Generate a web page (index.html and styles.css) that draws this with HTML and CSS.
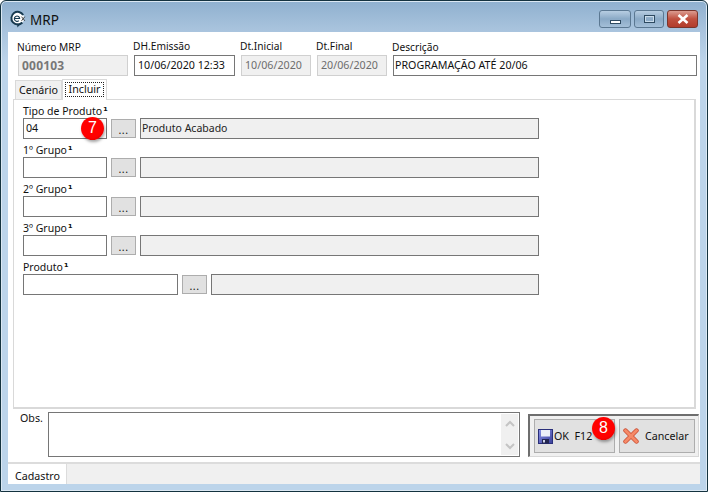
FILE: index.html
```html
<!DOCTYPE html>
<html lang="pt">
<head>
<meta charset="utf-8">
<title>MRP</title>
<link rel="stylesheet" href="styles.css">
</head>
<body>
<div class="window">
  <header class="titlebar">
    <div class="title-left">
      <svg class="app-icon" width="24" height="24" viewBox="0 0 24 24">
        <circle cx="10" cy="10" r="8" fill="#fff"/>
        <path d="M16 15A7.6 7.6 0 1 1 17 6" fill="none" stroke="#16394f" stroke-width="2.4"/>
        <path d="M6.6 10.2h6.2a3.2 3.2 0 1 0-1 2.6" fill="none" stroke="#16394f" stroke-width="1.3"/>
        <path d="M15 8l4 5M19 8l-4 5" stroke="#333" stroke-width="1.1"/>
        <path d="M10 16l3 2-3 3z" fill="#16394f"/>
      </svg>
      <span class="title-text">MRP</span>
    </div>
    <div class="controls">
      <div class="ctl ctl-min"><span class="glyph-min"></span></div>
      <div class="ctl ctl-max"><span class="glyph-max"></span></div>
      <div class="ctl ctl-close">
        <svg width="14" height="10" viewBox="0 0 14 10"><path d="M2.5 1l9 8M11.5 1l-9 8" stroke="#fff" stroke-width="2.6"/></svg>
      </div>
    </div>
  </header>

  <main class="client">
    <section class="top-fields">
      <div class="field f-num"><label class="lbl lbl-top lbl-low">Número MRP</label><div class="box box-ro bold">000103</div></div>
      <div class="field f-dh"><label class="lbl lbl-top">DH.Emissão</label><div class="box box-date">10/06/2020 12:33</div></div>
      <div class="field f-dt"><label class="lbl lbl-top">Dt.Inicial</label><div class="box box-ro">10/06/2020</div></div>
      <div class="field f-dt"><label class="lbl lbl-top">Dt.Final</label><div class="box box-ro">20/06/2020</div></div>
      <div class="field f-desc"><label class="lbl lbl-top lbl-low">Descrição</label><div class="box box-tight">PROGRAMAÇÃO ATÉ 20/06</div></div>
    </section>

    <nav class="tabs">
      <div class="tab">Cenário</div>
      <div class="tab tab-active"><span class="focus">Incluir</span></div>
    </nav>

    <section class="panel">
      <div class="row">
        <label class="lbl">Tipo de Produto<span class="sup">¹</span></label>
        <div class="controls-row">
          <div class="box w-code badge-host">04<span class="badge badge-7">7</span></div>
          <div class="dots">...</div>
          <div class="box box-fill w-desc">Produto Acabado</div>
        </div>
      </div>
      <div class="row">
        <label class="lbl">1º Grupo<span class="sup">¹</span></label>
        <div class="controls-row">
          <div class="box w-code"></div>
          <div class="dots">...</div>
          <div class="box box-fill w-desc"></div>
        </div>
      </div>
      <div class="row">
        <label class="lbl">2º Grupo<span class="sup">¹</span></label>
        <div class="controls-row">
          <div class="box w-code"></div>
          <div class="dots">...</div>
          <div class="box box-fill w-desc"></div>
        </div>
      </div>
      <div class="row">
        <label class="lbl">3º Grupo<span class="sup">¹</span></label>
        <div class="controls-row">
          <div class="box w-code"></div>
          <div class="dots">...</div>
          <div class="box box-fill w-desc"></div>
        </div>
      </div>
      <div class="row">
        <label class="lbl">Produto<span class="sup">¹</span></label>
        <div class="controls-row">
          <div class="box w-prod"></div>
          <div class="dots">...</div>
          <div class="box box-fill w-desc2"></div>
        </div>
      </div>
    </section>

    <section class="bottom">
      <label class="lbl obs-lbl">Obs.</label>
      <div class="obs">
        <div class="scroll">
          <svg width="10" height="7" viewBox="0 0 10 7"><path d="M1 6l4-4 4 4" fill="none" stroke="#c4c4c4" stroke-width="2"/></svg>
          <svg width="10" height="7" viewBox="0 0 10 7"><path d="M1 1l4 4 4-4" fill="none" stroke="#c4c4c4" stroke-width="2"/></svg>
        </div>
      </div>
      <div class="actions">
        <button class="btn btn-ok">
          <svg width="15" height="15" viewBox="0 0 15 15">
            <defs><linearGradient id="disk" x1="0" y1="0" x2="1" y2="1"><stop offset="0" stop-color="#8b93e6"/><stop offset="1" stop-color="#3a3f9a"/></linearGradient></defs>
            <rect x="0.5" y="0.5" width="14" height="14" fill="url(#disk)" stroke="#2a2f7a"/>
            <rect x="3" y="1" width="9" height="6.5" fill="#eef0f8"/>
            <rect x="4" y="10" width="7" height="4.5" fill="#23264f"/>
            <rect x="5" y="11" width="2" height="2.5" fill="#cfd2e8"/>
          </svg>
          <span>OK&nbsp; F12</span>
          <span class="badge badge-8">8</span>
        </button>
        <button class="btn btn-cancel">
          <svg width="16" height="16" viewBox="0 0 16 16"><path d="M2.5 2.5l11 11M13.5 2.5l-11 11" stroke="#c9492e" stroke-width="4.4" stroke-linecap="round"/><path d="M2.5 2.5l11 11M13.5 2.5l-11 11" stroke="#f58a68" stroke-width="3" stroke-linecap="round"/></svg>
          <span>Cancelar</span>
        </button>
      </div>
    </section>

    <footer class="status">
      <div class="status-tab">Cadastro</div>
    </footer>
  </main>
</div>
</body>
</html>
```
FILE: styles.css
```css
* { box-sizing: border-box; }
html, body { margin: 0; padding: 0; }
body {
  width: 708px;
  height: 492px;
  overflow: hidden;
  font-family: "Noto Sans", "DejaVu Sans", sans-serif;
  font-size: 10.7px;
  color: #111;
  background: #fff;
}
.window {
  width: 708px;
  height: 492px;
  display: flex;
  flex-direction: column;
  padding: 1px 7px 7px 7px;
  border: 1px solid #14323f;
  border-radius: 6px 6px 0 0;
  background: linear-gradient(#8fb0cf 0, #a8c3dd 28px, #bcd4ea 60px, #bcd4ea 100%);
  box-shadow: inset 0 0 0 1px #dbe8f3;
}
.titlebar {
  height: 30px;
  flex: none;
  display: flex;
  justify-content: space-between;
  align-items: flex-start;
}
.title-left { display: flex; align-items: center; height: 30px; padding: 5px 0 0 1px; }
.app-icon { width: 20px; height: 20px; }
.title-text { font-size: 13.5px; margin-left: 1px; color: #111; }
.controls { display: flex; gap: 3px; margin-top: 8px; margin-right: 2px; }
.ctl {
  height: 18px;
  width: 32px;
  border: 1px solid #5b7892;
  border-radius: 3px;
  display: flex;
  align-items: center;
  justify-content: center;
  background: linear-gradient(#b7cde2, #8aa9c6 50%, #a4bfd8);
}
.ctl-max { width: 30px; }
.ctl-close {
  width: 31px;
  border-color: #7a352c;
  background: linear-gradient(#dc9c90, #c0503f 50%, #b23c2c);
}
.glyph-min { width: 11px; height: 4px; background: #fff; border: 1px solid #2e4a61; margin-top: 5px; }
.glyph-max { width: 11px; height: 8px; background: transparent; border: 1px solid #2e4a61; box-shadow: inset 0 0 0 1px #c9dbea; }
.client {
  flex: 1;
  display: flex;
  flex-direction: column;
  background: #fff;
  min-height: 0;
}
.top-fields {
  display: flex;
  gap: 6px;
  padding: 7px 0 0 10px;
  height: 47px;
  flex: none;
}
.field { display: flex; flex-direction: column; }
.lbl { display: block; height: 16px; line-height: 14px; white-space: nowrap; color: #111; }
.lbl-top { font-size: 10.2px; margin-left: -1px; }
.lbl-low { padding-top: 1px; }
.f-num { width: 110px; }
.f-dh { width: 101px; }
.f-dt { width: 70px; }
.f-desc { width: 304px; }
.box {
  height: 21px;
  line-height: 19px;
  padding: 0 2px;
  border: 1px solid #767676;
  background: #fff;
  white-space: nowrap;
  overflow: hidden;
}
.box-date { padding-left: 3px; }
.box-tight { padding-left: 1px; }
.box-ro { border: 1px solid #d0d0d0; background: #f0f0f0; color: #6d6d6d; padding-left: 3px; }
.bold { font-weight: 700; font-size: 12px; letter-spacing: 0.2px; color: #777; }
.tabs { display: flex; height: 20px; flex: none; padding: 0 0 0 7px; align-items: flex-end; position: relative; z-index: 1; }
.tab {
  height: 19px;
  width: 47px;
  line-height: 18px;
  text-align: center;
  background: #f0f0f0;
  border: 1px solid #d9d9d9;
  border-bottom: 0;
}
.tab-active {
  height: 21px;
  width: 45px;
  background: #fff;
  padding: 2px 2px 0;
  margin-bottom: -1px;
}
.focus { display: block; height: 15px; line-height: 13px; border: 1px dotted #222; }
.panel {
  width: 683px;
  height: 310px;
  flex: none;
  margin-left: 5px;
  padding: 3px 0 0 9px;
  border: 1px solid #d9d9d9;
  border-right-width: 2px;
  border-bottom-width: 2px;
  display: flex;
  flex-direction: column;
}
.row { height: 39px; flex: none; }
.row .lbl { height: 15px; line-height: 17px; font-size: 10.5px; }
.sup { margin-left: 1px; font-size: 10.5px; font-family: "DejaVu Sans", sans-serif; font-weight: 700; line-height: 1; }
.controls-row { display: flex; align-items: flex-start; gap: 4px; }
.w-code { width: 84px; }
.w-prod { width: 155px; }
.w-desc { width: 399px; }
.w-desc2 { width: 328px; }
.box-fill { background: #f0f0f0; color: #222; padding-left: 1px; font-size: 10.5px; }
.dots {
  width: 25px;
  height: 19px;
  margin-top: 1px;
  background: #e1e1e1;
  border: 1px solid #adadad;
  text-align: center;
  line-height: 20px;
  letter-spacing: 0.5px;
  flex: none;
}
.badge-host { position: relative; overflow: visible; }
.badge {
  position: absolute;
  width: 23px;
  height: 23px;
  border-radius: 50%;
  background: radial-gradient(circle at 45% 40%, #f00 60%, #c30000);
  color: #fff;
  font-size: 16px;
  line-height: 22px;
  text-align: center;
  box-shadow: 1px 2px 3px rgba(0,0,0,.35);
  font-family: "Liberation Sans", sans-serif;
  font-weight: 400;
}
.badge-7 { left: 57px; top: -2px; }
.badge-8 { left: 57px; top: -3px; }
.bottom {
  flex: none;
  display: flex;
  height: 53px;
  align-items: flex-start;
  position: relative;
}
.obs-lbl { width: 40px; padding: 0 0 0 12px; height: 20px; line-height: 14px; margin-top: 2px; }
.obs {
  width: 472px;
  height: 45px;
  margin-top: 3px;
  border: 1px solid #767676;
  background: #fff;
  display: flex;
  justify-content: flex-end;
  padding: 1px;
}
.scroll {
  width: 17px;
  height: 100%;
  background: #f0f0f0;
  display: flex;
  flex-direction: column;
  align-items: center;
  justify-content: space-between;
  padding: 6px 0 5px;
}
.actions {
  width: 171px;
  height: 43px;
  margin: 5px 0 0 8px;
  border-top: 2px solid #6e6e6e;
  border-left: 2px solid #6e6e6e;
  border-bottom: 1px solid #d8d8d8;
  border-right: 1px solid #d8d8d8;
  background: #f0f0f0;
  display: flex;
  gap: 4px;
  padding: 3px 0 0 4px;
}
.btn {
  position: relative;
  height: 34px;
  background: #e1e1e1;
  border: 1px solid #adadad;
  font: inherit;
  color: #111;
  display: flex;
  align-items: center;
  padding: 0;
}
.btn-ok { width: 81px; padding-left: 3px; gap: 1px; }
.btn-cancel { width: 76px; padding-left: 3px; gap: 6px; }
.status {
  flex: 1;
  border-top: 2px solid #dcdcdc;
  background: #f0f0f0;
  min-height: 0;
}
.status-tab {
  width: 59px;
  height: 100%;
  background: #fff;
  border-right: 1px solid #dcdcdc;
  padding-left: 7px;
  line-height: 24px;
}
```
